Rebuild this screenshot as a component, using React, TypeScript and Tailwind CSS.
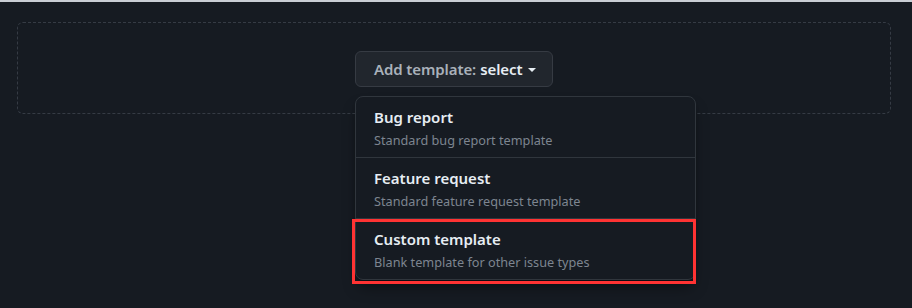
import React from 'react';

type TemplateOption = {
  title: string;
  description: string;
  highlighted?: boolean;
};

const TEMPLATES: TemplateOption[] = [
  { title: 'Bug report', description: 'Standard bug report template' },
  { title: 'Feature request', description: 'Standard feature request template' },
  { title: 'Custom template', description: 'Blank template for other issue types', highlighted: true },
];

const App: React.FC = () => {
  return (
    <div
      className="w-[912px] h-[308px] overflow-hidden bg-[#161b22] border-t-2 border-[#c9ced4] pt-5"
      style={{ fontFamily: '"Noto Sans", "Segoe UI", sans-serif' }}
    >
      <div className="ml-[17px] mr-[21px] h-[92px] border border-dashed border-[#353b44] rounded-md flex justify-center pt-[28px]">
        <div className="relative h-9">
          <button className="h-9 w-[198px] flex items-center pl-[18px] rounded-md bg-[#21262d] border border-[#363b43] text-[15px] font-semibold text-[#a9b1ba] tracking-[-0.1px]">
            Add template:
            <span className="ml-1 text-[#e6edf3]">select</span>
            <span className="ml-[6px] mt-[2px] w-0 h-0 border-x-[4px] border-x-transparent border-t-[4px] border-t-[#e6edf3]"></span>
          </button>

          <div className="absolute left-0 top-[45px] w-[341px] bg-[#161b22] border border-[#30363d] rounded-lg shadow-lg shadow-black/40 z-10">
            {TEMPLATES.map((t, i) => (
              <div
                key={t.title}
                className={`relative pl-[18px] pt-[10px] pb-[7px] ${i > 0 ? 'border-t border-[#30363d]' : ''}`}
              >
                <div className="text-[15px] leading-5 font-semibold text-[#e6edf3]">{t.title}</div>
                <div className="mt-[3px] text-[12.7px] leading-5 text-[#7d8590]">{t.description}</div>
                {t.highlighted && (
                  <div className="absolute -left-[4px] -right-[1px] top-0 -bottom-[5px] border-[3px] border-[#ff3333] pointer-events-none"></div>
                )}
              </div>
            ))}
          </div>
        </div>
      </div>
    </div>
  );
};

export default App;
